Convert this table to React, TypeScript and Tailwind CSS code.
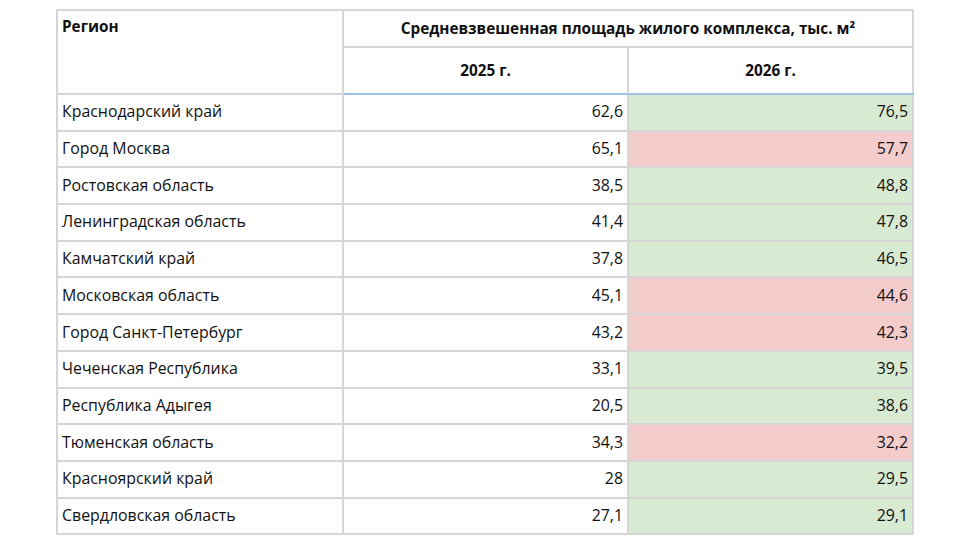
const rows: [string, string, string, "g" | "r"][] = [
  ["Краснодарский край", "62,6", "76,5", "g"],
  ["Город Москва", "65,1", "57,7", "r"],
  ["Ростовская область", "38,5", "48,8", "g"],
  ["Ленинградская область", "41,4", "47,8", "g"],
  ["Камчатский край", "37,8", "46,5", "g"],
  ["Московская область", "45,1", "44,6", "r"],
  ["Город Санкт-Петербург", "43,2", "42,3", "r"],
  ["Чеченская Республика", "33,1", "39,5", "g"],
  ["Республика Адыгея", "20,5", "38,6", "g"],
  ["Тюменская область", "34,3", "32,2", "r"],
  ["Красноярский край", "28", "29,5", "g"],
  ["Свердловская область", "27,1", "29,1", "g"],
];

export default function App() {
  return (
    <div className="w-[970px] h-[546px] bg-white pt-[9px] pl-[56px] font-['Open_Sans',sans-serif] text-[#111]">
      <table className="border-collapse table-fixed w-[856px]">
        <colgroup>
          <col className="w-[286px]" />
          <col className="w-[285px]" />
          <col className="w-[285px]" />
        </colgroup>
        <thead>
          <tr className="h-[37px]">
            <th
              rowSpan={2}
              className="border-2 border-[#d6d6d6] text-left align-top px-[4px] pt-[4px] text-[15.3px] font-bold"
            >
              Регион
            </th>
            <th
              colSpan={2}
              className="border-2 border-[#d6d6d6] text-center align-middle text-[15.3px] font-bold"
            >
              Средневзвешенная площадь жилого комплекса, тыс. м²
            </th>
          </tr>
          <tr className="h-[47px]">
            <th className="border-2 border-[#d6d6d6] border-b-[#9fc3e7] text-center text-[15.3px] font-bold">
              2025 г.
            </th>
            <th className="border-2 border-[#d6d6d6] border-b-[#9fc3e7] text-center text-[15.3px] font-bold">
              2026 г.
            </th>
          </tr>
        </thead>
        <tbody>
          {rows.map(([region, a, b, c]) => (
            <tr key={region} className="h-[36.7px] text-[15.9px]">
              <td className="border-2 border-[#d6d6d6] px-[4px] align-middle">{region}</td>
              <td className="border-2 border-[#d6d6d6] px-[4px] text-right align-middle">{a}</td>
              <td
                className={
                  c === "g"
                    ? "border-2 border-[#d6d6d6] bg-[#d9ead3] px-[4px] text-right align-middle"
                    : "border-2 border-[#d6d6d6] bg-[#f4cccc] px-[4px] text-right align-middle"
                }
              >
                {b}
              </td>
            </tr>
          ))}
        </tbody>
      </table>
    </div>
  );
}
